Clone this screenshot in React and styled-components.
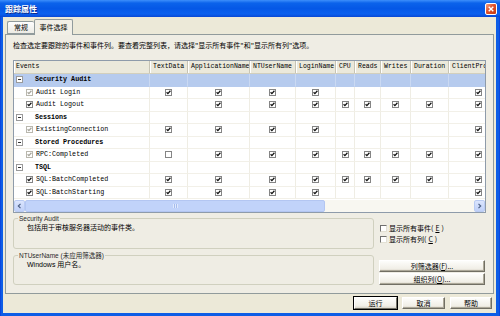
import styled, { createGlobalStyle, css } from 'styled-components'

const CJK = '"Noto Sans CJK SC", "Liberation Sans", sans-serif'
const UI = '"Liberation Sans", "Noto Sans CJK SC", sans-serif'
const MONO = '"Liberation Mono", "Noto Sans CJK SC", monospace'
const GRID_COLUMNS = '136px 38px 62px 46px 40px 19px 26px 30px 38px 60px'

const GlobalStyle = createGlobalStyle`
  html, body { margin: 0; padding: 0; }
  body { width: 500px; height: 316px; overflow: hidden; background: #fff; font-family: ${CJK}; }
  * { box-sizing: border-box; }
`

const Window = styled.div`
  width: 500px;
  height: 316px;
  display: flex;
  flex-direction: column;
  background: linear-gradient(90deg, #0831d9 0, #0d5de6 1px, #0d5de6 calc(100% - 1px), #0831d9 100%);
`

const TitleBar = styled.div`
  height: 17px;
  flex: none;
  display: flex;
  align-items: center;
  justify-content: space-between;
  padding: 0 3px 0 5px;
  background: linear-gradient(180deg, #3d8ffb 0%, #0b63eb 18%, #0558e6 50%, #0a60ef 82%, #0848d4 100%);
`

const Title = styled.span`
  color: #fff;
  font: bold 8px/1 ${CJK};
  text-shadow: 1px 1px 0 #0a2a8c;
`

const CloseButton = styled.div`
  width: 12px;
  height: 12px;
  border: 1px solid #fff;
  border-radius: 2px;
  background: linear-gradient(135deg, #f4a184, #e0522c 45%, #c23a12);
  display: grid;
  place-items: center;
`

const Client = styled.div`
  flex: 1;
  margin: 0 4px 3px 3px;
  padding: 0 2px;
  background: #ece9d8;
  display: flex;
  flex-direction: column;
`

const TabStrip = styled.div`
  height: 17px;
  flex: none;
  display: flex;
  align-items: flex-end;
  padding-left: 2px;
`

const Tab = styled.div`
  font: 7px/1 ${CJK};
  color: #000;
  display: flex;
  align-items: center;
  justify-content: center;
  border: 1px solid #919b9c;
  border-radius: 2px 2px 0 0;

  ${({ $active }) =>
    $active
      ? css`
          width: 39px;
          height: 16px;
          margin-bottom: -1px;
          padding-bottom: 1px;
          border-bottom: none;
          background: #f1efe6;
          position: relative;
          z-index: 1;
        `
      : css`
          width: 27px;
          height: 13px;
          border-right: none;
          background: linear-gradient(#fefefe, #ecebe4);
        `}
`

const Panel = styled.div`
  height: 260px;
  flex: none;
  border: 1px solid #919b9c;
  background: #efede4;
  padding: 5px 7px 0;
  display: flex;
  flex-direction: column;
`

const Intro = styled.div`
  font: 7px/10px ${CJK};
  color: #000;
  white-space: nowrap;
`

const EventGrid = styled.div`
  margin-top: 10px;
  border: 1px solid #8e9baa;
  background: #fff;
  overflow: hidden;
  display: flex;
  flex-direction: column;
`

const HeaderRow = styled.div`
  display: grid;
  grid-template-columns: ${GRID_COLUMNS};
  height: 13px;
  background: #ebe9db;
  border-bottom: 1px solid #d2cfbd;
`

const HeaderCell = styled.div`
  font: 6.5px/1 ${MONO};
  color: #000;
  display: flex;
  align-items: center;
  padding-left: ${({ $first }) => ($first ? 2 : 3)}px;
  border-right: 1px solid #c7c4b4;
  box-shadow: inset 1px 0 #fff;
  white-space: nowrap;
  overflow: hidden;
`

const Row = styled.div`
  display: grid;
  grid-template-columns: ${GRID_COLUMNS};
  height: 12.5px;
  background: ${({ $selected }) => ($selected ? '#b6cbee' : '#fff')};
`

const Cell = styled.div`
  display: flex;
  align-items: center;
  justify-content: center;
  border-right: 1px solid ${({ $selected }) => ($selected ? '#cad9f2' : '#efede4')};
  border-bottom: 1px solid ${({ $selected }) => ($selected ? '#b6cbee' : '#f2f0e8')};
`

const EventCell = styled(Cell)`
  justify-content: flex-start;
  gap: ${({ $group }) => ($group ? 12 : 3)}px;
  padding-left: ${({ $group }) => ($group ? 2 : 12)}px;
  font: ${({ $group }) => ($group ? 'bold' : 'normal')} 6.7px/1 ${MONO};
  color: #000;
  white-space: nowrap;
`

const Spacer = styled.div`
  height: 1px;
`

const HScroll = styled.div`
  height: 12px;
  display: flex;
  background: #f8f7f1;
`

const ScrollButton = styled.div`
  width: 11px;
  flex: none;
  border: 1px solid #b9cbf3;
  border-radius: 2px;
  background: linear-gradient(#dbe5fd, #bfd0f8);
  display: grid;
  place-items: center;
`

const Thumb = styled.div`
  width: 300px;
  flex: none;
  border: 1px solid #b3c6f2;
  border-radius: 2px;
  background: #c1d3fa;
  display: grid;
  place-items: center;
`

const Grip = styled.div`
  width: 5px;
  height: 4px;
  background: repeating-linear-gradient(90deg, #eef3fe 0 1px, #9bb2e6 1px 2px);
  opacity: 0.7;
`

const Track = styled.div`
  flex: 1;
`

const Lower = styled.div`
  margin-top: 1px;
  display: grid;
  grid-template-columns: 361px 1fr;
  column-gap: 5px;
`

const GroupStack = styled.div`
  display: flex;
  flex-direction: column;
  gap: 2px;
`

const Group = styled.fieldset`
  margin: 0;
  padding: 0 4px;
  min-width: 0;
  height: ${({ $h }) => $h}px;
  border: 1px solid #d0d0bf;
  border-radius: 3px;
`

const Legend = styled.legend`
  padding: 0 1px;
  font: 6.5px/9px ${UI};
  color: #2b2b2b;
`

const GroupText = styled.div`
  padding-left: 9px;
  font: 7px/9px ${UI};
  color: #000;
`

const SideColumn = styled.div`
  display: flex;
  flex-direction: column;
  padding-top: 9px;
`

const CheckRow = styled.label`
  height: 11px;
  display: flex;
  align-items: center;
  gap: 2px;
  padding-left: 1px;
  font: 7px/1 ${CJK};
  color: #000;
`

const CheckBox = styled.span`
  width: 7px;
  height: 7px;
  background: #fff;
  border: 1px solid;
  border-color: #6f6f6f #e2e0d4 #e2e0d4 #6f6f6f;
`

const SideButtons = styled.div`
  margin-top: 15px;
  display: flex;
  flex-direction: column;
  gap: 1px;
`

const Button = styled.div`
  width: ${({ $w }) => $w}px;
  height: 12px;
  display: flex;
  align-items: center;
  justify-content: center;
  font: 7px/1 ${CJK};
  color: #000;
  background: linear-gradient(#fdfdfb, #f1efe7 75%, #dcd7cb);
  border: 1px solid;
  border-color: #fff #716f64 #716f64 #fff;
  box-shadow: ${({ $default }) => ($default ? '0 0 0 1px #000' : 'inset -1px -1px #aca899')};
`

const Footer = styled.div`
  height: 19px;
  flex: none;
  display: flex;
  justify-content: flex-end;
  align-items: flex-start;
  gap: 5px;
  padding: 3px 2px 0 0;
`

const U = styled.span`
  text-decoration: underline;
`

const columns = [
  'Events',
  'TextData',
  'ApplicationName',
  'NTUserName',
  'LoginName',
  'CPU',
  'Reads',
  'Writes',
  'Duration',
  'ClientProcessID',
]

const rows = [
  { group: 'Security Audit', selected: true },
  { name: 'Audit Login', dim: true, cells: [1, 1, 1, 1, 0, 0, 0, 0, 1] },
  { name: 'Audit Logout', cells: [0, 1, 1, 1, 1, 1, 1, 1, 1] },
  { group: 'Sessions' },
  { name: 'ExistingConnection', dim: true, cells: [1, 1, 1, 1, 0, 0, 0, 0, 1] },
  { group: 'Stored Procedures' },
  { name: 'RPC:Completed', dim: true, cells: ['off', 1, 1, 1, 1, 1, 1, 1, 1] },
  { group: 'TSQL' },
  { name: 'SQL:BatchCompleted', cells: [1, 1, 1, 1, 1, 1, 1, 1, 1] },
  { name: 'SQL:BatchStarting', cells: [1, 1, 1, 1, 0, 0, 0, 0, 1] },
]

function Tick({ checked = true, dim }) {
  return (
    <svg width="7" height="7" viewBox="0 0 7 7">
      <rect x="0.5" y="0.5" width="6" height="6" fill="#fff" stroke={dim ? '#b9b7ad' : '#858585'} />
      {checked && (
        <path d="M1.6 3.2 L2.9 4.6 L5.4 1.8" fill="none" stroke={dim ? '#a6a49a' : '#111'} strokeWidth="1.3" />
      )}
    </svg>
  )
}

function Expander() {
  return (
    <svg width="7" height="7" viewBox="0 0 7 7">
      <rect x="0.5" y="0.5" width="6" height="6" fill="#fff" stroke="#9a9a9a" />
      <path d="M2 3.5 H5" stroke="#333" strokeWidth="1" />
    </svg>
  )
}

function Arrow({ dir }) {
  return (
    <svg width="5" height="6" viewBox="0 0 5 6">
      <path
        d={dir === 'left' ? 'M3.5 0.8 L1.3 3 L3.5 5.2' : 'M1.5 0.8 L3.7 3 L1.5 5.2'}
        fill="none"
        stroke="#4d6185"
        strokeWidth="1.2"
      />
    </svg>
  )
}

function GridRow({ row }) {
  if (row.group) {
    return (
      <Row $selected={row.selected}>
        <EventCell $group $selected={row.selected}>
          <Expander />
          {row.group}
        </EventCell>
        {columns.slice(1).map((c) => (
          <Cell key={c} $selected={row.selected} />
        ))}
      </Row>
    )
  }
  return (
    <Row>
      <EventCell>
        <Tick dim={row.dim} />
        {row.name}
      </EventCell>
      {row.cells.map((v, i) => (
        <Cell key={i}>{v ? <Tick checked={v !== 'off'} /> : null}</Cell>
      ))}
    </Row>
  )
}

export default function App() {
  return (
    <>
      <GlobalStyle />
      <Window>
        <TitleBar>
          <Title>跟踪属性</Title>
          <CloseButton>
            <svg width="6" height="6" viewBox="0 0 6 6">
              <path d="M0.7 0.7 L5.3 5.3 M5.3 0.7 L0.7 5.3" stroke="#fff" strokeWidth="1.4" />
            </svg>
          </CloseButton>
        </TitleBar>
        <Client>
          <TabStrip>
            <Tab>常规</Tab>
            <Tab $active>事件选择</Tab>
          </TabStrip>
          <Panel>
            <Intro>检查选定要跟踪的事件和事件列。要查看完整列表，请选择"显示所有事件"和"显示所有列"选项。</Intro>
            <EventGrid>
              <HeaderRow>
                {columns.map((c, i) => (
                  <HeaderCell key={c} $first={i === 0}>
                    {c}
                  </HeaderCell>
                ))}
              </HeaderRow>
              {rows.map((row) => (
                <GridRow key={row.group || row.name} row={row} />
              ))}
              <Spacer />
              <HScroll>
                <ScrollButton>
                  <Arrow dir="left" />
                </ScrollButton>
                <Thumb>
                  <Grip />
                </Thumb>
                <Track />
                <ScrollButton>
                  <Arrow dir="right" />
                </ScrollButton>
              </HScroll>
            </EventGrid>
            <Lower>
              <GroupStack>
                <Group $h={35}>
                  <Legend>Security Audit</Legend>
                  <GroupText>包括用于审核服务器活动的事件类。</GroupText>
                </Group>
                <Group $h={34}>
                  <Legend>NTUserName (未应用筛选器)</Legend>
                  <GroupText>Windows 用户名。</GroupText>
                </Group>
              </GroupStack>
              <SideColumn>
                <CheckRow>
                  <CheckBox />
                  显示所有事件(<U>E</U>)
                </CheckRow>
                <CheckRow>
                  <CheckBox />
                  显示所有列(<U>C</U>)
                </CheckRow>
                <SideButtons>
                  <Button $w={106}>
                    列筛选器(<U>F</U>)...
                  </Button>
                  <Button $w={106}>
                    组织列(<U>O</U>)...
                  </Button>
                </SideButtons>
              </SideColumn>
            </Lower>
          </Panel>
          <Footer>
            <Button $w={43} $default>
              运行
            </Button>
            <Button $w={43}>取消</Button>
            <Button $w={42}>帮助</Button>
          </Footer>
        </Client>
      </Window>
    </>
  )
}
